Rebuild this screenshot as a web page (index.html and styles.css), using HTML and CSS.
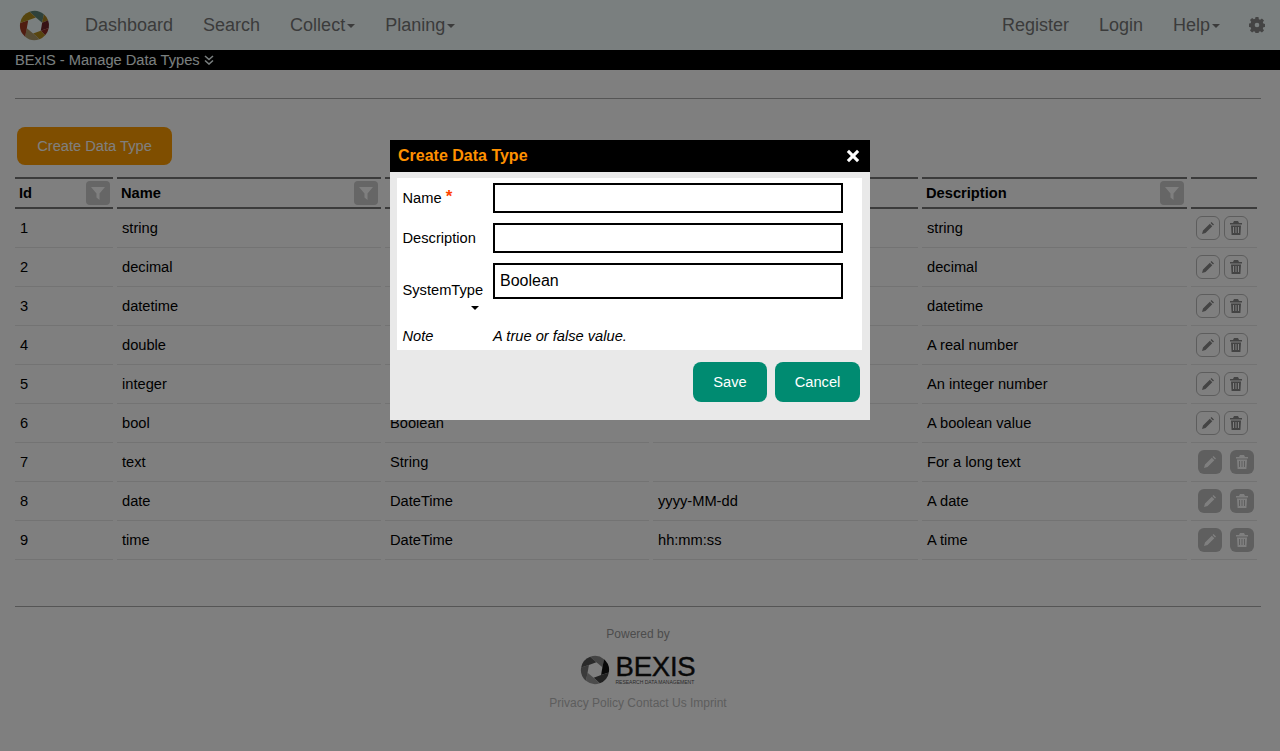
FILE: index.html
```html
<!DOCTYPE html>
<html lang="en">
<head>
  <meta charset="UTF-8" />
  <title>BExIS - Manage Data Types</title>
  <link rel="stylesheet" href="styles.css">
</head>
<body>
  <!-- icon sprite -->
  <svg class="sprite" width="0" height="0">
    <symbol id="i-filter" viewBox="0 0 14 14"><path d="M0 1h14L8.500 7.500V14l-3-2.500v-4z"/></symbol>
    <symbol id="i-pencil" viewBox="0 0 14 14"><path d="M10.500 1L13 3.500 12 4.500 9.500 2zM8.800 2.700L11.300 5.200 4.500 12 1 13l1-3.500z"/></symbol>
    <symbol id="i-trash" viewBox="0 0 14 14"><path fill-rule="evenodd" d="M5 0h4l1 2h3v1.500H1V2h3zM2 4.500h10l-.6 9.500H2.600zM4 6v6h1V6zM6.500 6v6h1V6zM9 6v6h1V6z"/></symbol>
  </svg>

  <nav class="navbar">
    <svg class="logo" viewBox="0 0 32 32" width="31" height="31">
      <path d="M10.870 1.900A15 15 0 0 1 25.640 4.510L23.920 13.120 17.440 7.720Z" fill="#5f8576"/>
      <path d="M25.640 4.510A15 15 0 0 1 30 10.500L23.920 13.120Z" fill="#a8801c"/>
      <path d="M30 10.500A15 15 0 0 1 30.770 18.600L22.480 21.400 23.920 13.120Z" fill="#6e2428"/>
      <path d="M30.770 18.600A15 15 0 0 1 27 26L22.480 21.400Z" fill="#8c2a24"/>
      <path d="M27 26A15 15 0 0 1 21.130 30.100L14.560 24.280 22.480 21.400Z" fill="#b08a1e"/>
      <path d="M21.130 30.100A15 15 0 0 1 6.360 27.490L8.080 18.880 14.560 24.280Z" fill="#ad9868"/>
      <path d="M6.360 27.490A15 15 0 0 1 1.230 13.400L9.520 10.600 8.080 18.880Z" fill="#a03a22"/>
      <path d="M1.230 13.400A15 15 0 0 1 10.870 1.900L17.440 7.720 9.520 10.600Z" fill="#ad8a1c"/>
    </svg>
    <ul class="nav-left">
      <li>Dashboard</li>
      <li>Search</li>
      <li>Collect<span class="caret"></span></li>
      <li>Planing<span class="caret"></span></li>
    </ul>
    <ul class="nav-right">
      <li>Register</li>
      <li>Login</li>
      <li>Help<span class="caret"></span></li>
      <li class="gear">
        <svg viewBox="0 0 24 24" width="16" height="16"><path fill-rule="evenodd" d="M9.800 0h4.400l.6 3.200 1.900.8 2.700-1.800 3.100 3.100-1.800 2.700.8 1.900 3.200.6v4.400l-3.200.6-.8 1.900 1.800 2.700-3.100 3.100-2.700-1.800-1.900.8-.6 3.200H9.800l-.6-3.200-1.900-.8-2.700 1.800-3.100-3.100 1.800-2.700-.8-1.900-3.200-.6V9.800l3.200-.6.8-1.900-1.800-2.700 3.100-3.100 2.700 1.800 1.900-.8zM12 8.500a3.500 3.500 0 1 0 0 7 3.500 3.500 0 0 0 0-7z"/></svg>
      </li>
    </ul>
  </nav>

  <div class="titlebar">
    <span>BExIS - Manage Data Types</span>
    <svg class="chevrons" viewBox="0 0 10 10" width="10" height="10"><path d="M1 1l4 3.500 4-3.500M1 5.500l4 3.500 4-3.500" fill="none" stroke="currentColor" stroke-width="1.600"/></svg>
  </div>

  <main class="content">
    <hr class="rule">
    <button class="btn-create">Create Data Type</button>

    <table class="grid">
      <thead>
        <tr>
          <th class="col-id"><div class="th-in">Id<span class="filter"><svg width="14" height="14"><use href="#i-filter"/></svg></span></div></th>
          <th class="col-s"><div class="th-in">Name<span class="filter"><svg width="14" height="14"><use href="#i-filter"/></svg></span></div></th>
          <th class="col-s"></th>
          <th class="col-m"></th>
          <th class="col-m"><div class="th-in">Description<span class="filter"><svg width="14" height="14"><use href="#i-filter"/></svg></span></div></th>
          <th class="col-act"></th>
        </tr>
      </thead>
      <tbody>
        <tr>
          <td>1</td><td>string</td><td></td><td></td><td>string</td>
          <td class="td-act"><div class="act act-line"><span class="act-btn"><svg width="14" height="14"><use href="#i-pencil"/></svg></span><span class="act-btn"><svg width="14" height="14"><use href="#i-trash"/></svg></span></div></td>
        </tr>
        <tr>
          <td>2</td><td>decimal</td><td></td><td></td><td>decimal</td>
          <td class="td-act"><div class="act act-line"><span class="act-btn"><svg width="14" height="14"><use href="#i-pencil"/></svg></span><span class="act-btn"><svg width="14" height="14"><use href="#i-trash"/></svg></span></div></td>
        </tr>
        <tr>
          <td>3</td><td>datetime</td><td></td><td></td><td>datetime</td>
          <td class="td-act"><div class="act act-line"><span class="act-btn"><svg width="14" height="14"><use href="#i-pencil"/></svg></span><span class="act-btn"><svg width="14" height="14"><use href="#i-trash"/></svg></span></div></td>
        </tr>
        <tr>
          <td>4</td><td>double</td><td></td><td></td><td>A real number</td>
          <td class="td-act"><div class="act act-line"><span class="act-btn"><svg width="14" height="14"><use href="#i-pencil"/></svg></span><span class="act-btn"><svg width="14" height="14"><use href="#i-trash"/></svg></span></div></td>
        </tr>
        <tr>
          <td>5</td><td>integer</td><td></td><td></td><td>An integer number</td>
          <td class="td-act"><div class="act act-line"><span class="act-btn"><svg width="14" height="14"><use href="#i-pencil"/></svg></span><span class="act-btn"><svg width="14" height="14"><use href="#i-trash"/></svg></span></div></td>
        </tr>
        <tr>
          <td>6</td><td>bool</td><td>Boolean</td><td></td><td>A boolean value</td>
          <td class="td-act"><div class="act act-line"><span class="act-btn"><svg width="14" height="14"><use href="#i-pencil"/></svg></span><span class="act-btn"><svg width="14" height="14"><use href="#i-trash"/></svg></span></div></td>
        </tr>
        <tr>
          <td>7</td><td>text</td><td>String</td><td></td><td>For a long text</td>
          <td class="td-act"><div class="act act-solid"><span class="act-btn"><svg width="14" height="14"><use href="#i-pencil"/></svg></span><span class="act-btn"><svg width="14" height="14"><use href="#i-trash"/></svg></span></div></td>
        </tr>
        <tr>
          <td>8</td><td>date</td><td>DateTime</td><td>yyyy-MM-dd</td><td>A date</td>
          <td class="td-act"><div class="act act-solid"><span class="act-btn"><svg width="14" height="14"><use href="#i-pencil"/></svg></span><span class="act-btn"><svg width="14" height="14"><use href="#i-trash"/></svg></span></div></td>
        </tr>
        <tr>
          <td>9</td><td>time</td><td>DateTime</td><td>hh:mm:ss</td><td>A time</td>
          <td class="td-act"><div class="act act-solid"><span class="act-btn"><svg width="14" height="14"><use href="#i-pencil"/></svg></span><span class="act-btn"><svg width="14" height="14"><use href="#i-trash"/></svg></span></div></td>
        </tr>
      </tbody>
    </table>

    <hr class="rule rule-foot">
    <footer class="foot">
      <div class="powered">Powered by</div>
      <div class="foot-logo">
        <svg viewBox="0 0 32 32" width="30" height="30">
          <path d="M10.870 1.900A15 15 0 0 1 25.640 4.510L23.920 13.120 17.440 7.720Z" fill="#888"/>
          <path d="M25.640 4.510A15 15 0 0 1 30.770 18.600L22.480 21.400 23.920 13.120Z" fill="#111"/>
          <path d="M30.770 18.600A15 15 0 0 1 21.130 30.100L14.560 24.280 22.480 21.400Z" fill="#444"/>
          <path d="M21.130 30.100A15 15 0 0 1 6.360 27.490L8.080 18.880 14.560 24.280Z" fill="#999"/>
          <path d="M6.360 27.490A15 15 0 0 1 1.230 13.400L9.520 10.600 8.080 18.880Z" fill="#777"/>
          <path d="M1.230 13.400A15 15 0 0 1 10.870 1.900L17.440 7.720 9.520 10.600Z" fill="#555"/>
        </svg>
        <div class="foot-mark">
          <div class="foot-name">BEXIS</div>
          <div class="foot-sub">RESEARCH DATA MANAGEMENT</div>
        </div>
      </div>
      <div class="foot-links">Privacy Policy Contact Us Imprint</div>
    </footer>
  </main>

  <div class="overlay"></div>

  <div class="modal">
    <div class="modal-head">
      <span>Create Data Type</span>
      <svg class="modal-x" viewBox="0 0 14 14" width="14" height="14"><path d="M3 .8L7 4.800 11 .8 13.200 3 9.200 7l4 4-2.200 2.200-4-4-4 4L.8 11l4-4-4-4z" fill="#fff"/></svg>
    </div>
    <div class="modal-body">
      <div class="form-row">
        <label class="form-label">Name <span class="req">*</span></label>
        <input class="form-input" type="text">
      </div>
      <div class="form-row">
        <label class="form-label">Description</label>
        <input class="form-input" type="text">
      </div>
      <div class="form-row form-row-sys">
        <label class="form-label">SystemType<span class="sel-caret"></span></label>
        <div class="form-input form-select">Boolean</div>
      </div>
      <div class="form-row form-row-note">
        <span class="form-label">Note</span>
        <span>A true or false value.</span>
      </div>
    </div>
    <div class="modal-foot">
      <button class="btn-modal btn-save">Save</button>
      <button class="btn-modal btn-cancel">Cancel</button>
    </div>
  </div>
</body>
</html>
```

FILE: styles.css
```css
* {
  box-sizing: border-box;
}
html, body {
  margin: 0;
  padding: 0;
}
body {
  font-family: "Liberation Sans", Arial, sans-serif;
  font-size: 14.67px;
  color: #000;
  background: #fff;
  height: 751px;
  overflow: hidden;
}
.sprite {
  position: absolute;
}
.navbar {
  height: 50px;
  background: #f4ffff;
  display: flex;
  align-items: center;
  padding-left: 19px;
  font-size: 18px;
  color: #777;
}
.logo {
  flex: none;
}
.navbar ul {
  list-style: none;
  margin: 0;
  padding: 0;
  display: flex;
  align-items: center;
}
.navbar .nav-left {
  margin-left: 35px;
  gap: 30px;
}
.navbar .nav-right {
  margin-left: auto;
  gap: 30px;
  padding-right: 15px;
}
.caret {
  display: inline-block;
  width: 0;
  height: 0;
  margin-left: 2px;
  vertical-align: middle;
  border-top: 4px solid #777;
  border-left: 4px solid transparent;
  border-right: 4px solid transparent;
}
.gear {
  display: flex;
  margin-left: -1px;
}
.gear svg {
  fill: #888;
}
.titlebar {
  height: 20px;
  background: #000;
  color: #f4ffff;
  padding-left: 15px;
  line-height: 20px;
  display: flex;
  align-items: center;
  gap: 4px;
}
.chevrons {
  flex: none;
}
.content {
  padding: 0 19px 0 15px;
}
.rule {
  border: 0;
  border-top: 1px solid #aaa;
  margin: 28px 0 0;
}
.btn-create {
  display: block;
  margin: 28px 0 0 2px;
  width: 155px;
  height: 38px;
  background: #ff9c00;
  color: #fff;
  border: 0;
  border-radius: 8px;
  font-family: inherit;
  font-size: 14.67px;
}
.grid {
  border-collapse: separate;
  border-spacing: 4px 0;
  margin: 12px -4px 0;
  table-layout: fixed;
  width: 1250px;
}
.col-id { width: 98px; }
.col-s { width: 264px; }
.col-m { width: 265px; }
.col-act { width: 66px; }
.grid th {
  height: 32px;
  padding: 0;
  border-top: 2px solid #777;
  border-bottom: 2px solid #777;
  text-align: left;
  font-size: 14.67px;
}
.th-in {
  display: flex;
  align-items: center;
  justify-content: space-between;
  padding: 0 3px 0 4px;
}
.filter {
  width: 24px;
  height: 24px;
  background: #ccc;
  border-radius: 4px;
  display: flex;
  align-items: center;
  justify-content: center;
  fill: #fff;
}
.grid td {
  height: 39px;
  padding: 0 5px;
  border-bottom: 1px solid #e6e6e6;
}
.grid td.td-act {
  padding: 0;
}
.act {
  display: flex;
}
.act-line {
  gap: 4px;
  padding-left: 5px;
}
.act-solid {
  gap: 8px;
  padding-left: 7px;
}
.act-btn {
  width: 24px;
  height: 24px;
  border-radius: 6px;
  display: flex;
  align-items: center;
  justify-content: center;
}
.act-line .act-btn {
  border: 1px solid #bbb;
  fill: #888;
}
.act-solid .act-btn {
  background: #bebebe;
  fill: #fff;
}
.rule-foot {
  margin-top: 46px;
}
.foot {
  text-align: center;
  font-size: 12px;
}
.powered {
  margin-top: 20px;
  color: #999;
}
.foot-logo {
  display: flex;
  justify-content: center;
  align-items: center;
  gap: 5px;
  height: 30px;
  margin-top: 14px;
  color: #111;
}
.foot-mark {
  text-align: left;
}
.foot-name {
  font-size: 27.5px;
  line-height: 24px;
  letter-spacing: -.2px;
  -webkit-text-stroke: .4px #111;
}
.foot-sub {
  font-size: 5px;
  line-height: 6px;
  color: #555;
}
.foot-links {
  margin-top: 11px;
  color: #bbb;
}
.overlay {
  position: fixed;
  inset: 0;
  background: rgba(0, 0, 0, .5);
}
.modal {
  position: absolute;
  left: 390px;
  top: 140px;
  width: 480px;
  height: 280px;
  background: #e9e9e9;
}
.modal-head {
  height: 32px;
  background: #000;
  color: #ff9100;
  font-weight: bold;
  font-size: 16px;
  display: flex;
  align-items: center;
  justify-content: space-between;
  padding: 0 10px 0 8px;
}
.modal-body {
  margin: 6px 8px 0 7px;
  background: #fff;
  padding: 5px 0 0 5.5px;
  height: 172px;
}
.form-row {
  display: flex;
  align-items: center;
  margin-bottom: 10px;
}
.form-label {
  width: 90.5px;
  flex: none;
}
.req {
  color: #f40;
  font-size: 17px;
  line-height: 0;
  vertical-align: 1px;
  font-weight: bold;
}
.form-input {
  width: 350px;
  height: 30px;
  border: 2px solid #000;
  background: #fff;
  padding: 0 5px;
  font-family: inherit;
  font-size: 16px;
}
.form-row-sys {
  height: 50px;
  margin-bottom: 0;
  align-items: flex-start;
}
.form-row-sys .form-label {
  padding-top: 19px;
  position: relative;
}
.form-select {
  height: 36px;
  line-height: 31px;
}
.sel-caret {
  position: absolute;
  left: 68px;
  top: 43px;
  width: 0;
  height: 0;
  border-top: 4px solid #000;
  border-left: 4px solid transparent;
  border-right: 4px solid transparent;
}
.form-row-note {
  font-style: italic;
  margin: 13px 0 0;
  height: 20px;
}
.modal-foot {
  display: flex;
  justify-content: flex-end;
  gap: 8px;
  padding: 12px 10px 0 0;
}
.btn-modal {
  height: 40px;
  background: #008b71;
  color: #fff;
  border: 0;
  border-radius: 8px;
  font-family: inherit;
  font-size: 14.67px;
}
.btn-save { width: 74px; }
.btn-cancel { width: 85px; }
```
